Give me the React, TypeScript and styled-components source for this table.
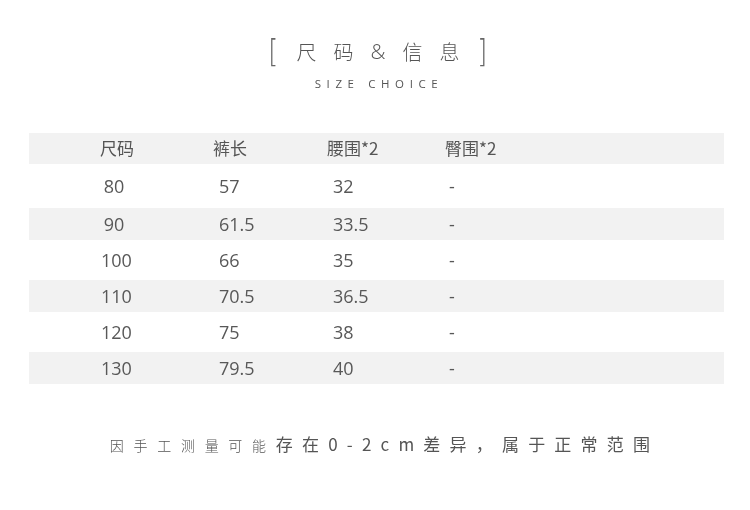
import styled, { createGlobalStyle } from 'styled-components';

const GlobalStyle = createGlobalStyle`
  html, body {
    margin: 0;
    padding: 0;
    background: #ffffff;
  }
  body {
    width: 750px;
    height: 510px;
    overflow: hidden;
    font-family: 'Open Sans', 'Noto Sans CJK SC', sans-serif;
    color: #555;
  }
`;

const rows = [
  ['80', '57', '32', '-'],
  ['90', '61.5', '33.5', '-'],
  ['100', '66', '35', '-'],
  ['110', '70.5', '36.5', '-'],
  ['120', '75', '38', '-'],
  ['130', '79.5', '40', '-'],
];

function App() {
  return (
    <Page>
      <GlobalStyle />
      <Heading>
        <Bracket>[</Bracket>
        <TitleText>
          <span>尺</span>
          <span>码</span>
          <Amp>&amp;</Amp>
          <span>信</span>
          <span>息</span>
        </TitleText>
        <Bracket>]</Bracket>
      </Heading>
      <SubTitle>SIZE CHOICE</SubTitle>

      <Table>
        <Row $shade $height={31}>
          <HeadCell>尺码</HeadCell>
          <HeadCell>裤长</HeadCell>
          <HeadCell>腰围*2</HeadCell>
          <HeadCell>臀围*2</HeadCell>
        </Row>
        {rows.map((r, i) => (
          <Row key={r[0]} $shade={i % 2 === 1} $height={i % 2 === 1 ? 32 : i === 0 ? 44 : 40}>
            <SizeCell>{r[0]}</SizeCell>
            <DataCell>{r[1]}</DataCell>
            <DataCell>{r[2]}</DataCell>
            <DataCell $dash>{r[3]}</DataCell>
          </Row>
        ))}
      </Table>

      <Note>
        <Small>因手工测量可能</Small>
        <Big>存在0-2cm差异，属于正常范围</Big>
      </Note>
    </Page>
  );
}

export default App;

const Page = styled.div`
  width: 750px;
  height: 510px;
  display: flex;
  flex-direction: column;
  align-items: center;
  padding-top: 34px;
  box-sizing: border-box;
  will-change: transform;
`;

const Heading = styled.div`
  display: flex;
  align-items: center;
  gap: 13px;
  height: 34px;
  margin-left: 6px;
`;

const Bracket = styled.div`
  font-family: 'DejaVu Sans', sans-serif;
  font-weight: 200;
  font-size: 32px;
  line-height: 34px;
  color: #666;
  transform: scaleX(0.8);
`;

const TitleText = styled.div`
  display: flex;
  align-items: center;
  gap: 17px;
  padding: 0 4px;
  font-family: 'Noto Sans CJK SC', sans-serif;
  font-weight: 300;
  font-size: 20px;
  color: #555;
`;

const Amp = styled.span`
  font-family: 'Open Sans', sans-serif;
  font-weight: 300;
  font-size: 21px;
`;

const SubTitle = styled.div`
  margin-top: 8px;
  font-family: 'Open Sans', sans-serif;
  font-size: 11.5px;
  letter-spacing: 5.6px;
  color: #555;
  margin-left: 8px;
`;

const Table = styled.div`
  margin-top: 42px;
  width: 695px;
  align-self: flex-start;
  margin-left: 29px;
  display: flex;
  flex-direction: column;
`;

const Row = styled.div<{ $shade?: boolean; $height: number }>`
  height: ${(p) => p.$height}px;
  background: ${(p) => (p.$shade ? '#f2f2f2' : '#ffffff')};
  display: grid;
  grid-template-columns: 71px 113px 114px 118px 1fr;
  align-items: center;
  &::before {
    content: '';
  }
`;

const HeadCell = styled.div`
  font-family: 'Noto Sans CJK SC', sans-serif;
  font-size: 17px;
  color: #555;
  line-height: 1;
  padding-bottom: 3px;
`;

const SizeCell = styled.div`
  font-size: 18px;
  color: #585858;
  width: 26px;
  text-align: center;
  margin-left: 1px;
`;

const DataCell = styled.div<{ $dash?: boolean }>`
  font-size: 18px;
  color: #585858;
  padding-left: ${(p) => (p.$dash ? 4 : 6)}px;
`;

const Note = styled.div`
  margin-top: 47px;
  display: flex;
  align-items: baseline;
  margin-left: 19px;
  font-family: 'Noto Sans CJK SC', sans-serif;
  color: #555;
`;

const Small = styled.span`
  font-size: 14px;
  font-weight: 300;
  letter-spacing: 9.7px;
`;

const Big = styled.span`
  font-size: 17px;
  letter-spacing: 9.2px;
`;
